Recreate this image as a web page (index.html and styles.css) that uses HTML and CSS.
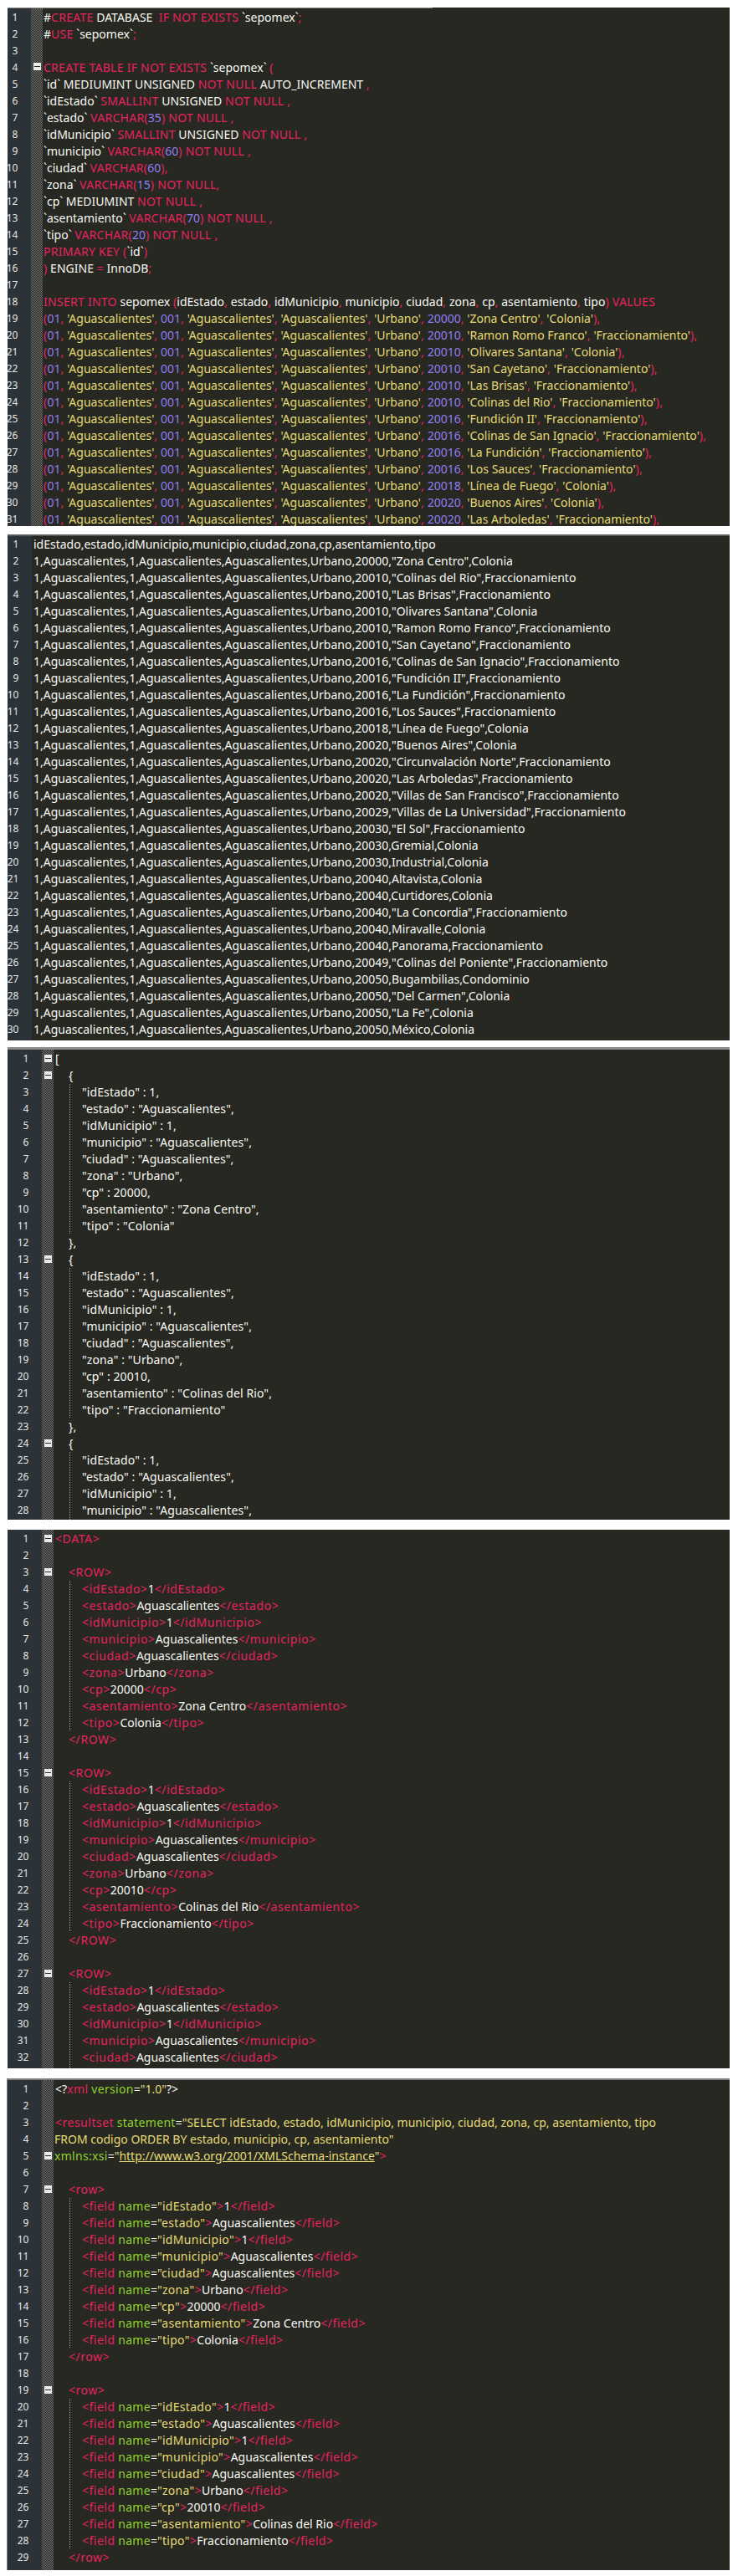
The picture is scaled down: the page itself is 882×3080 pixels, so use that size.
FILE: index.html
```html
<!DOCTYPE html>
<html lang="es">
<head>
<meta charset="utf-8">
<title>sepomex</title>
<link rel="stylesheet" href="styles.css">
</head>
<body>
<main class="page">

<section class="ed sql">
<div class="topline"></div>
<div class="ln sp1"><span class="no"></span><span class="fm"></span></div>
<div class="ln"><span class="no">1</span><span class="fm"></span><span class="tx">#<b>CREATE</b> DATABASE&nbsp; <b>IF NOT EXISTS</b> `sepomex`<b>;</b></span></div>
<div class="ln"><span class="no">2</span><span class="fm"></span><span class="tx">#<b>USE</b> `sepomex`<b>;</b></span></div>
<div class="ln"><span class="no">3</span><span class="fm"></span><span class="tx"></span></div>
<div class="ln"><span class="no">4</span><span class="fm"><i class="fb"></i></span><span class="tx"><b>CREATE TABLE IF NOT EXISTS</b> `sepomex` <b>(</b></span></div>
<div class="ln"><span class="no">5</span><span class="fm"></span><span class="tx">`id` MEDIUMINT UNSIGNED <b>NOT NULL</b> AUTO_INCREMENT <b>,</b></span></div>
<div class="ln"><span class="no">6</span><span class="fm"></span><span class="tx">`idEstado` <b>SMALLINT</b> UNSIGNED <b>NOT NULL ,</b></span></div>
<div class="ln"><span class="no">7</span><span class="fm"></span><span class="tx">`estado` <b>VARCHAR(</b><u>35</u><b>) NOT NULL ,</b></span></div>
<div class="ln"><span class="no">8</span><span class="fm"></span><span class="tx">`idMunicipio` <b>SMALLINT</b> UNSIGNED <b>NOT NULL ,</b></span></div>
<div class="ln"><span class="no">9</span><span class="fm"></span><span class="tx">`municipio` <b>VARCHAR(</b><u>60</u><b>) NOT NULL ,</b></span></div>
<div class="ln"><span class="no">10</span><span class="fm"></span><span class="tx">`ciudad` <b>VARCHAR(</b><u>60</u><b>),</b></span></div>
<div class="ln"><span class="no">11</span><span class="fm"></span><span class="tx">`zona` <b>VARCHAR(</b><u>15</u><b>) NOT NULL,</b></span></div>
<div class="ln"><span class="no">12</span><span class="fm"></span><span class="tx">`cp` MEDIUMINT <b>NOT NULL ,</b></span></div>
<div class="ln"><span class="no">13</span><span class="fm"></span><span class="tx">`asentamiento` <b>VARCHAR(</b><u>70</u><b>) NOT NULL ,</b></span></div>
<div class="ln"><span class="no">14</span><span class="fm"></span><span class="tx">`tipo` <b>VARCHAR(</b><u>20</u><b>) NOT NULL ,</b></span></div>
<div class="ln"><span class="no">15</span><span class="fm"></span><span class="tx"><b>PRIMARY KEY (</b>`id`<b>)</b></span></div>
<div class="ln"><span class="no">16</span><span class="fm"></span><span class="tx"><b>)</b> ENGINE <b>=</b> InnoDB<b>;</b></span></div>
<div class="ln"><span class="no">17</span><span class="fm"></span><span class="tx"></span></div>
<div class="ln"><span class="no">18</span><span class="fm"></span><span class="tx"><b>INSERT INTO</b> sepomex <b>(</b>idEstado<b>,</b> estado<b>,</b> idMunicipio<b>,</b> municipio<b>,</b> ciudad<b>,</b> zona<b>,</b> cp<b>,</b> asentamiento<b>,</b> tipo<b>) VALUES</b></span></div>
<div class="ln"><span class="no">19</span><span class="fm"></span><span class="tx"><b>(</b><u>01</u><b>,</b> <s>'Aguascalientes'</s><b>,</b> <u>001</u><b>,</b> <s>'Aguascalientes'</s><b>,</b> <s>'Aguascalientes'</s><b>,</b> <s>'Urbano'</s><b>,</b> <u>20000</u><b>,</b> <s>'Zona Centro'</s><b>,</b> <s>'Colonia'</s><b>),</b></span></div>
<div class="ln"><span class="no">20</span><span class="fm"></span><span class="tx"><b>(</b><u>01</u><b>,</b> <s>'Aguascalientes'</s><b>,</b> <u>001</u><b>,</b> <s>'Aguascalientes'</s><b>,</b> <s>'Aguascalientes'</s><b>,</b> <s>'Urbano'</s><b>,</b> <u>20010</u><b>,</b> <s>'Ramon Romo Franco'</s><b>,</b> <s>'Fraccionamiento'</s><b>),</b></span></div>
<div class="ln"><span class="no">21</span><span class="fm"></span><span class="tx"><b>(</b><u>01</u><b>,</b> <s>'Aguascalientes'</s><b>,</b> <u>001</u><b>,</b> <s>'Aguascalientes'</s><b>,</b> <s>'Aguascalientes'</s><b>,</b> <s>'Urbano'</s><b>,</b> <u>20010</u><b>,</b> <s>'Olivares Santana'</s><b>,</b> <s>'Colonia'</s><b>),</b></span></div>
<div class="ln"><span class="no">22</span><span class="fm"></span><span class="tx"><b>(</b><u>01</u><b>,</b> <s>'Aguascalientes'</s><b>,</b> <u>001</u><b>,</b> <s>'Aguascalientes'</s><b>,</b> <s>'Aguascalientes'</s><b>,</b> <s>'Urbano'</s><b>,</b> <u>20010</u><b>,</b> <s>'San Cayetano'</s><b>,</b> <s>'Fraccionamiento'</s><b>),</b></span></div>
<div class="ln"><span class="no">23</span><span class="fm"></span><span class="tx"><b>(</b><u>01</u><b>,</b> <s>'Aguascalientes'</s><b>,</b> <u>001</u><b>,</b> <s>'Aguascalientes'</s><b>,</b> <s>'Aguascalientes'</s><b>,</b> <s>'Urbano'</s><b>,</b> <u>20010</u><b>,</b> <s>'Las Brisas'</s><b>,</b> <s>'Fraccionamiento'</s><b>),</b></span></div>
<div class="ln"><span class="no">24</span><span class="fm"></span><span class="tx"><b>(</b><u>01</u><b>,</b> <s>'Aguascalientes'</s><b>,</b> <u>001</u><b>,</b> <s>'Aguascalientes'</s><b>,</b> <s>'Aguascalientes'</s><b>,</b> <s>'Urbano'</s><b>,</b> <u>20010</u><b>,</b> <s>'Colinas del Rio'</s><b>,</b> <s>'Fraccionamiento'</s><b>),</b></span></div>
<div class="ln"><span class="no">25</span><span class="fm"></span><span class="tx"><b>(</b><u>01</u><b>,</b> <s>'Aguascalientes'</s><b>,</b> <u>001</u><b>,</b> <s>'Aguascalientes'</s><b>,</b> <s>'Aguascalientes'</s><b>,</b> <s>'Urbano'</s><b>,</b> <u>20016</u><b>,</b> <s>'Fundición II'</s><b>,</b> <s>'Fraccionamiento'</s><b>),</b></span></div>
<div class="ln"><span class="no">26</span><span class="fm"></span><span class="tx"><b>(</b><u>01</u><b>,</b> <s>'Aguascalientes'</s><b>,</b> <u>001</u><b>,</b> <s>'Aguascalientes'</s><b>,</b> <s>'Aguascalientes'</s><b>,</b> <s>'Urbano'</s><b>,</b> <u>20016</u><b>,</b> <s>'Colinas de San Ignacio'</s><b>,</b> <s>'Fraccionamiento'</s><b>),</b></span></div>
<div class="ln"><span class="no">27</span><span class="fm"></span><span class="tx"><b>(</b><u>01</u><b>,</b> <s>'Aguascalientes'</s><b>,</b> <u>001</u><b>,</b> <s>'Aguascalientes'</s><b>,</b> <s>'Aguascalientes'</s><b>,</b> <s>'Urbano'</s><b>,</b> <u>20016</u><b>,</b> <s>'La Fundición'</s><b>,</b> <s>'Fraccionamiento'</s><b>),</b></span></div>
<div class="ln"><span class="no">28</span><span class="fm"></span><span class="tx"><b>(</b><u>01</u><b>,</b> <s>'Aguascalientes'</s><b>,</b> <u>001</u><b>,</b> <s>'Aguascalientes'</s><b>,</b> <s>'Aguascalientes'</s><b>,</b> <s>'Urbano'</s><b>,</b> <u>20016</u><b>,</b> <s>'Los Sauces'</s><b>,</b> <s>'Fraccionamiento'</s><b>),</b></span></div>
<div class="ln"><span class="no">29</span><span class="fm"></span><span class="tx"><b>(</b><u>01</u><b>,</b> <s>'Aguascalientes'</s><b>,</b> <u>001</u><b>,</b> <s>'Aguascalientes'</s><b>,</b> <s>'Aguascalientes'</s><b>,</b> <s>'Urbano'</s><b>,</b> <u>20018</u><b>,</b> <s>'Línea de Fuego'</s><b>,</b> <s>'Colonia'</s><b>),</b></span></div>
<div class="ln"><span class="no">30</span><span class="fm"></span><span class="tx"><b>(</b><u>01</u><b>,</b> <s>'Aguascalientes'</s><b>,</b> <u>001</u><b>,</b> <s>'Aguascalientes'</s><b>,</b> <s>'Aguascalientes'</s><b>,</b> <s>'Urbano'</s><b>,</b> <u>20020</u><b>,</b> <s>'Buenos Aires'</s><b>,</b> <s>'Colonia'</s><b>),</b></span></div>
<div class="ln"><span class="no">31</span><span class="fm"></span><span class="tx"><b>(</b><u>01</u><b>,</b> <s>'Aguascalientes'</s><b>,</b> <u>001</u><b>,</b> <s>'Aguascalientes'</s><b>,</b> <s>'Aguascalientes'</s><b>,</b> <s>'Urbano'</s><b>,</b> <u>20020</u><b>,</b> <s>'Las Arboledas'</s><b>,</b> <s>'Fraccionamiento'</s><b>),</b></span></div>
</section>

<section class="ed csv">
<div class="ln"><span class="no">1</span><span class="tx">idEstado,estado,idMunicipio,municipio,ciudad,zona,cp,asentamiento,tipo</span></div>
<div class="ln"><span class="no">2</span><span class="tx">1,Aguascalientes,1,Aguascalientes,Aguascalientes,Urbano,20000,"Zona Centro",Colonia</span></div>
<div class="ln"><span class="no">3</span><span class="tx">1,Aguascalientes,1,Aguascalientes,Aguascalientes,Urbano,20010,"Colinas del Rio",Fraccionamiento</span></div>
<div class="ln"><span class="no">4</span><span class="tx">1,Aguascalientes,1,Aguascalientes,Aguascalientes,Urbano,20010,"Las Brisas",Fraccionamiento</span></div>
<div class="ln"><span class="no">5</span><span class="tx">1,Aguascalientes,1,Aguascalientes,Aguascalientes,Urbano,20010,"Olivares Santana",Colonia</span></div>
<div class="ln"><span class="no">6</span><span class="tx">1,Aguascalientes,1,Aguascalientes,Aguascalientes,Urbano,20010,"Ramon Romo Franco",Fraccionamiento</span></div>
<div class="ln"><span class="no">7</span><span class="tx">1,Aguascalientes,1,Aguascalientes,Aguascalientes,Urbano,20010,"San Cayetano",Fraccionamiento</span></div>
<div class="ln"><span class="no">8</span><span class="tx">1,Aguascalientes,1,Aguascalientes,Aguascalientes,Urbano,20016,"Colinas de San Ignacio",Fraccionamiento</span></div>
<div class="ln"><span class="no">9</span><span class="tx">1,Aguascalientes,1,Aguascalientes,Aguascalientes,Urbano,20016,"Fundición II",Fraccionamiento</span></div>
<div class="ln"><span class="no">10</span><span class="tx">1,Aguascalientes,1,Aguascalientes,Aguascalientes,Urbano,20016,"La Fundición",Fraccionamiento</span></div>
<div class="ln"><span class="no">11</span><span class="tx">1,Aguascalientes,1,Aguascalientes,Aguascalientes,Urbano,20016,"Los Sauces",Fraccionamiento</span></div>
<div class="ln"><span class="no">12</span><span class="tx">1,Aguascalientes,1,Aguascalientes,Aguascalientes,Urbano,20018,"Línea de Fuego",Colonia</span></div>
<div class="ln"><span class="no">13</span><span class="tx">1,Aguascalientes,1,Aguascalientes,Aguascalientes,Urbano,20020,"Buenos Aires",Colonia</span></div>
<div class="ln"><span class="no">14</span><span class="tx">1,Aguascalientes,1,Aguascalientes,Aguascalientes,Urbano,20020,"Circunvalación Norte",Fraccionamiento</span></div>
<div class="ln"><span class="no">15</span><span class="tx">1,Aguascalientes,1,Aguascalientes,Aguascalientes,Urbano,20020,"Las Arboledas",Fraccionamiento</span></div>
<div class="ln"><span class="no">16</span><span class="tx">1,Aguascalientes,1,Aguascalientes,Aguascalientes,Urbano,20020,"Villas de San Francisco",Fraccionamiento</span></div>
<div class="ln"><span class="no">17</span><span class="tx">1,Aguascalientes,1,Aguascalientes,Aguascalientes,Urbano,20029,"Villas de La Universidad",Fraccionamiento</span></div>
<div class="ln"><span class="no">18</span><span class="tx">1,Aguascalientes,1,Aguascalientes,Aguascalientes,Urbano,20030,"El Sol",Fraccionamiento</span></div>
<div class="ln"><span class="no">19</span><span class="tx">1,Aguascalientes,1,Aguascalientes,Aguascalientes,Urbano,20030,Gremial,Colonia</span></div>
<div class="ln"><span class="no">20</span><span class="tx">1,Aguascalientes,1,Aguascalientes,Aguascalientes,Urbano,20030,Industrial,Colonia</span></div>
<div class="ln"><span class="no">21</span><span class="tx">1,Aguascalientes,1,Aguascalientes,Aguascalientes,Urbano,20040,Altavista,Colonia</span></div>
<div class="ln"><span class="no">22</span><span class="tx">1,Aguascalientes,1,Aguascalientes,Aguascalientes,Urbano,20040,Curtidores,Colonia</span></div>
<div class="ln"><span class="no">23</span><span class="tx">1,Aguascalientes,1,Aguascalientes,Aguascalientes,Urbano,20040,"La Concordia",Fraccionamiento</span></div>
<div class="ln"><span class="no">24</span><span class="tx">1,Aguascalientes,1,Aguascalientes,Aguascalientes,Urbano,20040,Miravalle,Colonia</span></div>
<div class="ln"><span class="no">25</span><span class="tx">1,Aguascalientes,1,Aguascalientes,Aguascalientes,Urbano,20040,Panorama,Fraccionamiento</span></div>
<div class="ln"><span class="no">26</span><span class="tx">1,Aguascalientes,1,Aguascalientes,Aguascalientes,Urbano,20049,"Colinas del Poniente",Fraccionamiento</span></div>
<div class="ln"><span class="no">27</span><span class="tx">1,Aguascalientes,1,Aguascalientes,Aguascalientes,Urbano,20050,Bugambilias,Condominio</span></div>
<div class="ln"><span class="no">28</span><span class="tx">1,Aguascalientes,1,Aguascalientes,Aguascalientes,Urbano,20050,"Del Carmen",Colonia</span></div>
<div class="ln"><span class="no">29</span><span class="tx">1,Aguascalientes,1,Aguascalientes,Aguascalientes,Urbano,20050,"La Fe",Colonia</span></div>
<div class="ln"><span class="no">30</span><span class="tx">1,Aguascalientes,1,Aguascalientes,Aguascalientes,Urbano,20050,México,Colonia</span></div>
<div class="ln sp3"><span class="no"></span></div>
</section>

<section class="ed wide json">
<div class="ln sp1"><span class="no"></span><span class="fm"></span></div>
<div class="ln"><span class="no">1</span><span class="fm"><i class="fb"></i></span><span class="tx">[</span></div>
<div class="ln"><span class="no">2</span><span class="fm"><i class="fb"></i></span><span class="tx i1">{</span></div>
<div class="ln"><span class="no">3</span><span class="fm"></span><span class="tx i2 gd">"idEstado" : 1,</span></div>
<div class="ln"><span class="no">4</span><span class="fm"></span><span class="tx i2 gd">"estado" : "Aguascalientes",</span></div>
<div class="ln"><span class="no">5</span><span class="fm"></span><span class="tx i2 gd">"idMunicipio" : 1,</span></div>
<div class="ln"><span class="no">6</span><span class="fm"></span><span class="tx i2 gd">"municipio" : "Aguascalientes",</span></div>
<div class="ln"><span class="no">7</span><span class="fm"></span><span class="tx i2 gd">"ciudad" : "Aguascalientes",</span></div>
<div class="ln"><span class="no">8</span><span class="fm"></span><span class="tx i2 gd">"zona" : "Urbano",</span></div>
<div class="ln"><span class="no">9</span><span class="fm"></span><span class="tx i2 gd">"cp" : 20000,</span></div>
<div class="ln"><span class="no">10</span><span class="fm"></span><span class="tx i2 gd">"asentamiento" : "Zona Centro",</span></div>
<div class="ln"><span class="no">11</span><span class="fm"></span><span class="tx i2 gd">"tipo" : "Colonia"</span></div>
<div class="ln"><span class="no">12</span><span class="fm"></span><span class="tx i1">},</span></div>
<div class="ln"><span class="no">13</span><span class="fm"><i class="fb"></i></span><span class="tx i1">{</span></div>
<div class="ln"><span class="no">14</span><span class="fm"></span><span class="tx i2 gd">"idEstado" : 1,</span></div>
<div class="ln"><span class="no">15</span><span class="fm"></span><span class="tx i2 gd">"estado" : "Aguascalientes",</span></div>
<div class="ln"><span class="no">16</span><span class="fm"></span><span class="tx i2 gd">"idMunicipio" : 1,</span></div>
<div class="ln"><span class="no">17</span><span class="fm"></span><span class="tx i2 gd">"municipio" : "Aguascalientes",</span></div>
<div class="ln"><span class="no">18</span><span class="fm"></span><span class="tx i2 gd">"ciudad" : "Aguascalientes",</span></div>
<div class="ln"><span class="no">19</span><span class="fm"></span><span class="tx i2 gd">"zona" : "Urbano",</span></div>
<div class="ln"><span class="no">20</span><span class="fm"></span><span class="tx i2 gd">"cp" : 20010,</span></div>
<div class="ln"><span class="no">21</span><span class="fm"></span><span class="tx i2 gd">"asentamiento" : "Colinas del Rio",</span></div>
<div class="ln"><span class="no">22</span><span class="fm"></span><span class="tx i2 gd">"tipo" : "Fraccionamiento"</span></div>
<div class="ln"><span class="no">23</span><span class="fm"></span><span class="tx i1">},</span></div>
<div class="ln"><span class="no">24</span><span class="fm"><i class="fb"></i></span><span class="tx i1">{</span></div>
<div class="ln"><span class="no">25</span><span class="fm"></span><span class="tx i2 gd">"idEstado" : 1,</span></div>
<div class="ln"><span class="no">26</span><span class="fm"></span><span class="tx i2 gd">"estado" : "Aguascalientes",</span></div>
<div class="ln"><span class="no">27</span><span class="fm"></span><span class="tx i2 gd">"idMunicipio" : 1,</span></div>
<div class="ln"><span class="no">28</span><span class="fm"></span><span class="tx i2 gd">"municipio" : "Aguascalientes",</span></div>
<div class="ln sp1"><span class="no"></span><span class="fm"></span><span class="tx gd"></span></div>
</section>

<section class="ed wide xml">
<div class="ln sp1"><span class="no"></span><span class="fm"></span></div>
<div class="ln"><span class="no">1</span><span class="fm"><i class="fb"></i></span><span class="tx"><b>&lt;DATA&gt;</b></span></div>
<div class="ln"><span class="no">2</span><span class="fm"></span><span class="tx"></span></div>
<div class="ln"><span class="no">3</span><span class="fm"><i class="fb"></i></span><span class="tx i1"><b>&lt;ROW&gt;</b></span></div>
<div class="ln"><span class="no">4</span><span class="fm"></span><span class="tx i2 gd"><b>&lt;idEstado&gt;</b>1<b>&lt;/idEstado&gt;</b></span></div>
<div class="ln"><span class="no">5</span><span class="fm"></span><span class="tx i2 gd"><b>&lt;estado&gt;</b>Aguascalientes<b>&lt;/estado&gt;</b></span></div>
<div class="ln"><span class="no">6</span><span class="fm"></span><span class="tx i2 gd"><b>&lt;idMunicipio&gt;</b>1<b>&lt;/idMunicipio&gt;</b></span></div>
<div class="ln"><span class="no">7</span><span class="fm"></span><span class="tx i2 gd"><b>&lt;municipio&gt;</b>Aguascalientes<b>&lt;/municipio&gt;</b></span></div>
<div class="ln"><span class="no">8</span><span class="fm"></span><span class="tx i2 gd"><b>&lt;ciudad&gt;</b>Aguascalientes<b>&lt;/ciudad&gt;</b></span></div>
<div class="ln"><span class="no">9</span><span class="fm"></span><span class="tx i2 gd"><b>&lt;zona&gt;</b>Urbano<b>&lt;/zona&gt;</b></span></div>
<div class="ln"><span class="no">10</span><span class="fm"></span><span class="tx i2 gd"><b>&lt;cp&gt;</b>20000<b>&lt;/cp&gt;</b></span></div>
<div class="ln"><span class="no">11</span><span class="fm"></span><span class="tx i2 gd"><b>&lt;asentamiento&gt;</b>Zona Centro<b>&lt;/asentamiento&gt;</b></span></div>
<div class="ln"><span class="no">12</span><span class="fm"></span><span class="tx i2 gd"><b>&lt;tipo&gt;</b>Colonia<b>&lt;/tipo&gt;</b></span></div>
<div class="ln"><span class="no">13</span><span class="fm"></span><span class="tx i1"><b>&lt;/ROW&gt;</b></span></div>
<div class="ln"><span class="no">14</span><span class="fm"></span><span class="tx"></span></div>
<div class="ln"><span class="no">15</span><span class="fm"><i class="fb"></i></span><span class="tx i1"><b>&lt;ROW&gt;</b></span></div>
<div class="ln"><span class="no">16</span><span class="fm"></span><span class="tx i2 gd"><b>&lt;idEstado&gt;</b>1<b>&lt;/idEstado&gt;</b></span></div>
<div class="ln"><span class="no">17</span><span class="fm"></span><span class="tx i2 gd"><b>&lt;estado&gt;</b>Aguascalientes<b>&lt;/estado&gt;</b></span></div>
<div class="ln"><span class="no">18</span><span class="fm"></span><span class="tx i2 gd"><b>&lt;idMunicipio&gt;</b>1<b>&lt;/idMunicipio&gt;</b></span></div>
<div class="ln"><span class="no">19</span><span class="fm"></span><span class="tx i2 gd"><b>&lt;municipio&gt;</b>Aguascalientes<b>&lt;/municipio&gt;</b></span></div>
<div class="ln"><span class="no">20</span><span class="fm"></span><span class="tx i2 gd"><b>&lt;ciudad&gt;</b>Aguascalientes<b>&lt;/ciudad&gt;</b></span></div>
<div class="ln"><span class="no">21</span><span class="fm"></span><span class="tx i2 gd"><b>&lt;zona&gt;</b>Urbano<b>&lt;/zona&gt;</b></span></div>
<div class="ln"><span class="no">22</span><span class="fm"></span><span class="tx i2 gd"><b>&lt;cp&gt;</b>20010<b>&lt;/cp&gt;</b></span></div>
<div class="ln"><span class="no">23</span><span class="fm"></span><span class="tx i2 gd"><b>&lt;asentamiento&gt;</b>Colinas del Rio<b>&lt;/asentamiento&gt;</b></span></div>
<div class="ln"><span class="no">24</span><span class="fm"></span><span class="tx i2 gd"><b>&lt;tipo&gt;</b>Fraccionamiento<b>&lt;/tipo&gt;</b></span></div>
<div class="ln"><span class="no">25</span><span class="fm"></span><span class="tx i1"><b>&lt;/ROW&gt;</b></span></div>
<div class="ln"><span class="no">26</span><span class="fm"></span><span class="tx"></span></div>
<div class="ln"><span class="no">27</span><span class="fm"><i class="fb"></i></span><span class="tx i1"><b>&lt;ROW&gt;</b></span></div>
<div class="ln"><span class="no">28</span><span class="fm"></span><span class="tx i2 gd"><b>&lt;idEstado&gt;</b>1<b>&lt;/idEstado&gt;</b></span></div>
<div class="ln"><span class="no">29</span><span class="fm"></span><span class="tx i2 gd"><b>&lt;estado&gt;</b>Aguascalientes<b>&lt;/estado&gt;</b></span></div>
<div class="ln"><span class="no">30</span><span class="fm"></span><span class="tx i2 gd"><b>&lt;idMunicipio&gt;</b>1<b>&lt;/idMunicipio&gt;</b></span></div>
<div class="ln"><span class="no">31</span><span class="fm"></span><span class="tx i2 gd"><b>&lt;municipio&gt;</b>Aguascalientes<b>&lt;/municipio&gt;</b></span></div>
<div class="ln"><span class="no">32</span><span class="fm"></span><span class="tx i2 gd"><b>&lt;ciudad&gt;</b>Aguascalientes<b>&lt;/ciudad&gt;</b></span></div>
<div class="ln sp3"><span class="no"></span><span class="fm"></span><span class="tx gd"></span></div>
</section>

<section class="ed wide res">
<div class="ln sp1"><span class="no"></span><span class="fm"></span></div>
<div class="ln"><span class="no">1</span><span class="fm"></span><span class="tx">&lt;?<b>xml</b> <em>version</em>=<s>"1.0"</s>?&gt;</span></div>
<div class="ln"><span class="no">2</span><span class="fm"></span><span class="tx"></span></div>
<div class="ln"><span class="no">3</span><span class="fm"></span><span class="tx"><b>&lt;resultset</b> <em>statement</em>=<s>"SELECT idEstado, estado, idMunicipio, municipio, ciudad, zona, cp, asentamiento, tipo</s></span></div>
<div class="ln"><span class="no">4</span><span class="fm"></span><span class="tx tight"><s>FROM codigo ORDER BY estado, municipio, cp, asentamiento"</s></span></div>
<div class="ln"><span class="no">5</span><span class="fm"><i class="fb"></i></span><span class="tx tight"><em>xmlns:xsi</em>=<s>"<a class="url">http://www.w3.org/2001/XMLSchema-instance</a>"</s><b>&gt;</b></span></div>
<div class="ln"><span class="no">6</span><span class="fm"></span><span class="tx"></span></div>
<div class="ln"><span class="no">7</span><span class="fm"><i class="fb"></i></span><span class="tx i1"><b>&lt;row&gt;</b></span></div>
<div class="ln"><span class="no">8</span><span class="fm"></span><span class="tx i2 gd"><b>&lt;field</b> <em>name</em>=<s>"idEstado"</s><b>&gt;</b>1<b>&lt;/field&gt;</b></span></div>
<div class="ln"><span class="no">9</span><span class="fm"></span><span class="tx i2 gd"><b>&lt;field</b> <em>name</em>=<s>"estado"</s><b>&gt;</b>Aguascalientes<b>&lt;/field&gt;</b></span></div>
<div class="ln"><span class="no">10</span><span class="fm"></span><span class="tx i2 gd"><b>&lt;field</b> <em>name</em>=<s>"idMunicipio"</s><b>&gt;</b>1<b>&lt;/field&gt;</b></span></div>
<div class="ln"><span class="no">11</span><span class="fm"></span><span class="tx i2 gd"><b>&lt;field</b> <em>name</em>=<s>"municipio"</s><b>&gt;</b>Aguascalientes<b>&lt;/field&gt;</b></span></div>
<div class="ln"><span class="no">12</span><span class="fm"></span><span class="tx i2 gd"><b>&lt;field</b> <em>name</em>=<s>"ciudad"</s><b>&gt;</b>Aguascalientes<b>&lt;/field&gt;</b></span></div>
<div class="ln"><span class="no">13</span><span class="fm"></span><span class="tx i2 gd"><b>&lt;field</b> <em>name</em>=<s>"zona"</s><b>&gt;</b>Urbano<b>&lt;/field&gt;</b></span></div>
<div class="ln"><span class="no">14</span><span class="fm"></span><span class="tx i2 gd"><b>&lt;field</b> <em>name</em>=<s>"cp"</s><b>&gt;</b>20000<b>&lt;/field&gt;</b></span></div>
<div class="ln"><span class="no">15</span><span class="fm"></span><span class="tx i2 gd"><b>&lt;field</b> <em>name</em>=<s>"asentamiento"</s><b>&gt;</b>Zona Centro<b>&lt;/field&gt;</b></span></div>
<div class="ln"><span class="no">16</span><span class="fm"></span><span class="tx i2 gd"><b>&lt;field</b> <em>name</em>=<s>"tipo"</s><b>&gt;</b>Colonia<b>&lt;/field&gt;</b></span></div>
<div class="ln"><span class="no">17</span><span class="fm"></span><span class="tx i1"><b>&lt;/row&gt;</b></span></div>
<div class="ln"><span class="no">18</span><span class="fm"></span><span class="tx"></span></div>
<div class="ln"><span class="no">19</span><span class="fm"><i class="fb"></i></span><span class="tx i1"><b>&lt;row&gt;</b></span></div>
<div class="ln"><span class="no">20</span><span class="fm"></span><span class="tx i2 gd"><b>&lt;field</b> <em>name</em>=<s>"idEstado"</s><b>&gt;</b>1<b>&lt;/field&gt;</b></span></div>
<div class="ln"><span class="no">21</span><span class="fm"></span><span class="tx i2 gd"><b>&lt;field</b> <em>name</em>=<s>"estado"</s><b>&gt;</b>Aguascalientes<b>&lt;/field&gt;</b></span></div>
<div class="ln"><span class="no">22</span><span class="fm"></span><span class="tx i2 gd"><b>&lt;field</b> <em>name</em>=<s>"idMunicipio"</s><b>&gt;</b>1<b>&lt;/field&gt;</b></span></div>
<div class="ln"><span class="no">23</span><span class="fm"></span><span class="tx i2 gd"><b>&lt;field</b> <em>name</em>=<s>"municipio"</s><b>&gt;</b>Aguascalientes<b>&lt;/field&gt;</b></span></div>
<div class="ln"><span class="no">24</span><span class="fm"></span><span class="tx i2 gd"><b>&lt;field</b> <em>name</em>=<s>"ciudad"</s><b>&gt;</b>Aguascalientes<b>&lt;/field&gt;</b></span></div>
<div class="ln"><span class="no">25</span><span class="fm"></span><span class="tx i2 gd"><b>&lt;field</b> <em>name</em>=<s>"zona"</s><b>&gt;</b>Urbano<b>&lt;/field&gt;</b></span></div>
<div class="ln"><span class="no">26</span><span class="fm"></span><span class="tx i2 gd"><b>&lt;field</b> <em>name</em>=<s>"cp"</s><b>&gt;</b>20010<b>&lt;/field&gt;</b></span></div>
<div class="ln"><span class="no">27</span><span class="fm"></span><span class="tx i2 gd"><b>&lt;field</b> <em>name</em>=<s>"asentamiento"</s><b>&gt;</b>Colinas del Rio<b>&lt;/field&gt;</b></span></div>
<div class="ln"><span class="no">28</span><span class="fm"></span><span class="tx i2 gd"><b>&lt;field</b> <em>name</em>=<s>"tipo"</s><b>&gt;</b>Fraccionamiento<b>&lt;/field&gt;</b></span></div>
<div class="ln"><span class="no">29</span><span class="fm"></span><span class="tx i1"><b>&lt;/row&gt;</b></span></div>
<div class="ln sp5"><span class="no"></span><span class="fm"></span></div>
</section>

</main>
</body>
</html>
```

FILE: styles.css
```css
html, body { margin: 0; background: #fff; }
.page { padding: 9px 10px 7px 9px; }

.ed {
  background: #272822;
  color: #f8f8f2;
  font: 14px/20px "Noto Sans", sans-serif;
  overflow: hidden;
}
.sql { --gut: 28px; height: 620px; }
.csv { --gut: 29px; margin-top: 10px; border-top: 2px solid #5a5a5a; }
.wide { --gut: 41px; }
.json { margin-top: 8px; border-top: 3px solid #8c8c8c; letter-spacing: 0.1px; }
.xml { margin-top: 12px; }
.res { margin: 12px 0 0 -1px; border-top: 2px solid #808080; border-left: 1px solid #808080; }

.topline { height: 1px; width: 508px; background: #8a8a8a; }

.ln { display: flex; height: 20px; white-space: pre; }
.sp1 { height: 1px; }
.sp3 { height: 3px; }
.sp5 { height: 5px; }

.no {
  flex: none;
  width: var(--gut);
  box-sizing: border-box;
  display: flex;
  justify-content: flex-end;
  padding-right: 16px;
  overflow: hidden;
  background: #2b3238;
  color: #e4e6e6;
  font-size: 12px;
  letter-spacing: -0.3px;
}

.fm {
  flex: none;
  width: 14px;
  box-sizing: border-box;
  padding: 5px 0 0 3px;
  background: repeating-conic-gradient(#6b6b6b 0 25%, #2b2c28 0 50%) 0 0 / 2px 2px;
}
.sql .fm { padding-top: 4px; }

.fb {
  display: block;
  width: 9px;
  height: 9px;
  background: linear-gradient(#2a2a2a, #2a2a2a) center / 7px 1px no-repeat, #ebebeb;
}

.tx { flex: 1; min-width: 0; padding-left: 1px; }
.csv .tx { padding-left: 2px; }
.wide .tx { padding-left: 2px; }
.wide .tx.tight { padding-left: 1px; }
.wide .tx.i1 { padding-left: 18px; }
.wide .tx.i2 { padding-left: 34px; }
.gd {
  background: linear-gradient(#9a9a9a 50%, transparent 0) 19px 0 / 1px 2px repeat-y;
}

b { font-weight: 400; color: #e8235f; }
s { text-decoration: none; color: #e6db74; }
u { text-decoration: none; color: #8f7ff2; }
em { font-style: normal; color: #8fd12e; }
.url { text-decoration: underline; }

.sql b { letter-spacing: 0.27px; }
.xml b { letter-spacing: 0.6px; }
.res b { letter-spacing: 0.5px; }
.res em { letter-spacing: 0.3px; }
.res .i2 s { letter-spacing: 0.3px; }
```
